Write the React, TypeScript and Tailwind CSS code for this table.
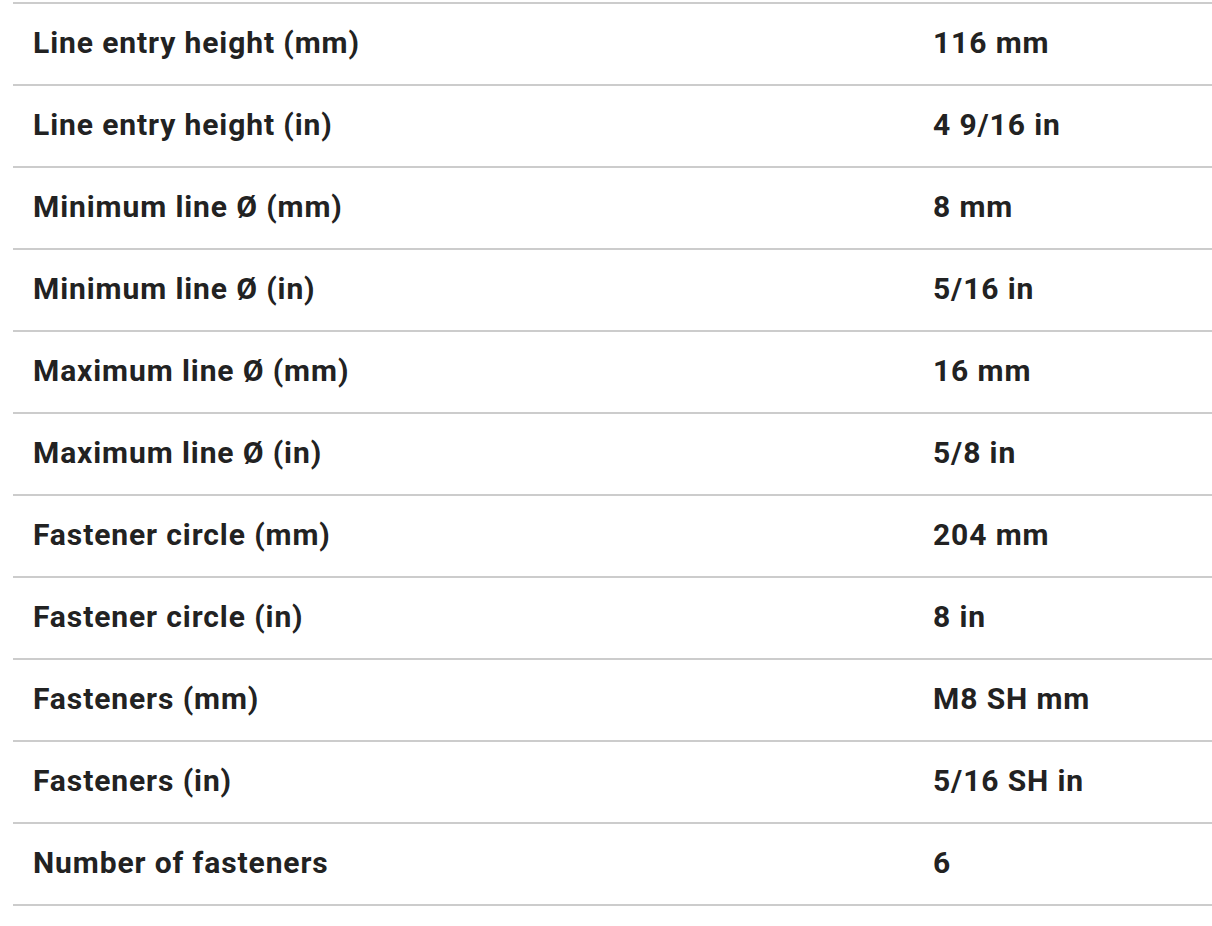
import React from 'react';

const rows: [string, string][] = [
  ['Line entry height (mm)', '116 mm'],
  ['Line entry height (in)', '4 9/16 in'],
  ['Minimum line Ø (mm)', '8 mm'],
  ['Minimum line Ø (in)', '5/16 in'],
  ['Maximum line Ø (mm)', '16 mm'],
  ['Maximum line Ø (in)', '5/8 in'],
  ['Fastener circle (mm)', '204 mm'],
  ['Fastener circle (in)', '8 in'],
  ['Fasteners (mm)', 'M8 SH mm'],
  ['Fasteners (in)', '5/16 SH in'],
  ['Number of fasteners', '6'],
];

const App: React.FC = () => {
  return (
    <div className="min-h-screen bg-white pt-[2px] pl-[13px]" style={{ fontFamily: 'Roboto, "Liberation Sans", sans-serif' }}>
      <div className="border-t-2 border-[#cccccc]">
        {rows.map(([label, value]) => (
          <div key={label} className="flex items-center h-[82px] pb-1 border-b-2 border-[#cccccc] text-[30px] font-bold tracking-[0.9px] text-[#222222]">
            <div className="w-[900px] pl-[20px]">{label}</div>
            <div className="pl-[20px]">{value}</div>
          </div>
        ))}
      </div>
    </div>
  );
};

export default App;
